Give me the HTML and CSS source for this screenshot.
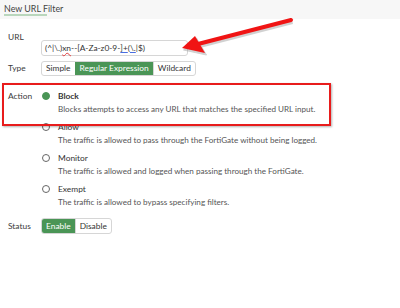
FILE: index.html
```html
<!DOCTYPE html>
<html lang="en">
<head>
  <meta charset="UTF-8">
  <title>New URL Filter</title>
  <link rel="stylesheet" href="styles.css">
</head>
<body>
  <div class="page">
    <!-- header -->
    <div class="header">
      <span class="header__title">New URL Filter</span>
    </div>

    <form class="form">
      <div class="row row--url">
        <label class="row__label">URL</label>
        <div class="row__field">
          <div class="input">(^|\.)<span class="sq">xn</span>--[A-Za-z0-9-<span class="sq2">]+</span>(<span class="sq2">\.</span>|$)</div>
        </div>
      </div>

      <div class="row row--type">
        <label class="row__label">Type</label>
        <div class="row__field">
          <div class="btn-group">
            <span class="btn">Simple</span>
            <span class="btn btn--active">Regular Expression</span>
            <span class="btn">Wildcard</span>
          </div>
        </div>
      </div>

      <div class="row row--action">
        <label class="row__label">Action</label>
        <div class="row__field options">
          <div class="option">
            <span class="radio radio--on"></span>
            <div class="option__text">
              <div class="option__name option__name--bold">Block</div>
              <div class="option__desc">Blocks attempts to access any URL that matches the specified URL input.</div>
            </div>
          </div>
          <div class="option">
            <span class="radio"></span>
            <div class="option__text">
              <div class="option__name">Allow</div>
              <div class="option__desc">The traffic is allowed to pass through the FortiGate without being logged.</div>
            </div>
          </div>
          <div class="option">
            <span class="radio"></span>
            <div class="option__text">
              <div class="option__name">Monitor</div>
              <div class="option__desc">The traffic is allowed and logged when passing through the FortiGate.</div>
            </div>
          </div>
          <div class="option">
            <span class="radio"></span>
            <div class="option__text">
              <div class="option__name">Exempt</div>
              <div class="option__desc">The traffic is allowed to bypass specifying filters.</div>
            </div>
          </div>
        </div>
      </div>

      <div class="row row--status">
        <label class="row__label">Status</label>
        <div class="row__field">
          <div class="btn-group btn-group--tall">
            <span class="btn btn--active">Enable</span>
            <span class="btn">Disable</span>
          </div>
        </div>
      </div>
    </form>

    <!-- annotations drawn over the screenshot -->
    <div class="highlight"></div>
    <svg class="arrow" width="400" height="80" viewBox="0 0 400 80">
      <g transform="translate(1.5,2)" fill="#9a9a9a" stroke="#9a9a9a" opacity="0.45">
        <line x1="291" y1="20" x2="198" y2="44" stroke-width="4"/>
        <polygon points="182,48 195,36 205,53"/>
      </g>
      <line x1="291" y1="20" x2="198" y2="44" stroke="#f01414" stroke-width="4" stroke-linecap="round"/>
      <polygon points="182,48 195,36 205,53" fill="#f01414"/>
    </svg>
  </div>
</body>
</html>
```

FILE: styles.css
```css
* {
  box-sizing: border-box;
  margin: 0;
  padding: 0;
}
body {
  background: #fff;
  font-family: Lato, "Open Sans", sans-serif;
  font-size: 8.4px;
  color: #3a3a3a;
}
.page {
  position: relative;
  width: 400px;
  height: 308px;
  overflow: hidden;
}

/* ---------- HEADER ---------- */
.header {
  background: #f7f7f7;
  height: 19px;
  padding: 3px 4px 0;
}
.header__title {
  position: relative;
  display: inline-block;
  font-size: 8.9px;
  line-height: 12px;
  color: #444;
}
.header__title::after {
  content: "";
  position: absolute;
  left: 0;
  top: 11px;
  width: 43px;
  height: 2px;
  background: #b9d6bc;
}

/* ---------- FORM ROWS ---------- */
.form {
  padding: 11px 0 0 8px;
}
.row {
  display: flex;
  align-items: flex-start;
}
.row__label {
  width: 33px;
  flex-shrink: 0;
  line-height: 14px;
}
.row--url .row__field {
  padding-top: 10px;
}
.row--type {
  margin-top: 5px;
}
.row--type .row__label {
  line-height: 15px;
}

.input {
  width: 147px;
  height: 16px;
  border: 1px solid #d6d6d6;
  border-radius: 3px;
  padding: 0 3px;
  line-height: 14px;
  color: #333;
}
.input .sq {
  text-decoration: underline wavy #e03a3a;
  text-decoration-thickness: 1px;
}
.input .sq2 {
  text-decoration: underline #4a6ee0;
}

/* ---------- BUTTON GROUPS ---------- */
.btn-group {
  display: inline-flex;
  border: 1px solid #d6d6d6;
  border-radius: 3px;
  overflow: hidden;
}
.btn {
  padding: 0 4px;
  line-height: 13px;
  color: #333;
  border-left: 1px solid #d6d6d6;
}
.btn:first-child {
  border-left: none;
}
.btn--active {
  background: #4a9556;
  color: #fff;
  border-left-color: #4a9556;
}
.btn-group--tall .btn {
  line-height: 14px;
}

/* ---------- ACTION OPTIONS ---------- */
.row--action {
  margin-top: 13px;
}
.options {
  display: flex;
  flex-direction: column;
  gap: 4px;
}
.option {
  display: flex;
  gap: 8px;
}
.radio {
  width: 8px;
  height: 8px;
  margin-top: 3px;
  margin-left: 1px;
  border-radius: 50%;
  border: 1px solid #666;
  flex-shrink: 0;
}
.radio--on {
  background: #4a9556;
  border-color: #4a9556;
}
.option__name {
  line-height: 14px;
  color: #333;
}
.option__name--bold {
  font-weight: 700;
}
.option__desc {
  line-height: 13px;
  font-size: 8.1px;
  color: #555;
}
.row--status {
  margin-top: 9px;
}
.row--status .row__label {
  line-height: 16px;
}

/* ---------- ANNOTATIONS ---------- */
.highlight {
  position: absolute;
  left: 2px;
  top: 83px;
  width: 329px;
  height: 43px;
  border: 2px solid #e81c1c;
  box-shadow: 1px 1px 2px rgba(0, 0, 0, 0.3);
}
.arrow {
  position: absolute;
  left: 0;
  top: 0;
}
```
